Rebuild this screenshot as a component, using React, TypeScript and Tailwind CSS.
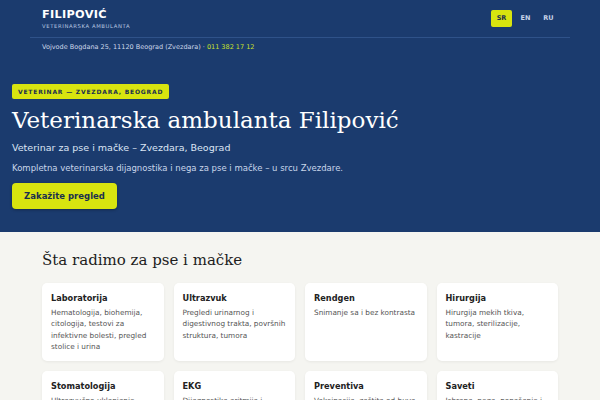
import React from "react";

const sans = { fontFamily: '"DejaVu Sans", sans-serif' };
const serif = { fontFamily: '"DejaVu Serif", serif' };

const services = [
  { t: "Laboratorija", d: "Hematologija, biohemija, citologija, testovi za infektivne bolesti, pregled stolice i urina" },
  { t: "Ultrazvuk", d: "Pregledi urinarnog i digestivnog trakta, površnih struktura, tumora" },
  { t: "Rendgen", d: "Snimanje sa i bez kontrasta" },
  { t: "Hirurgija", d: "Hirurgija mekih tkiva, tumora, sterilizacije, kastracije" },
  { t: "Stomatologija", d: "Ultrazvučno uklanjanje kamenca, vađenje zuba" },
  { t: "EKG", d: "Dijagnostika aritmija i srčanih oboljenja" },
  { t: "Preventiva", d: "Vakcinacija, zaštita od buva i krpelja" },
  { t: "Saveti", d: "Ishrana, nega, ponašanje i dobrobit ljubimaca" },
];

export default function App() {
  return (
    <div className="w-[600px] h-[400px] overflow-hidden bg-[#f5f5f1]" style={sans}>
      <div className="bg-[#1b3b6e]">
        <header className="mx-auto w-[540px]">
          <div className="flex items-start justify-between px-3 pt-[8px] pb-[7px] border-b border-[#2f5289]">
            <div>
              <div className="text-[11.3px] font-bold text-white leading-[14px] tracking-[0.3px]">FILIPOVIĆ</div>
              <div className="text-[5.3px] tracking-[0.6px] text-[#b8c8e0] leading-[7px] mt-[1px]">VETERINARSKA AMBULANTA</div>
            </div>
            <div className="flex items-center gap-[4px] mt-[2px]">
              <span className="bg-[#d8e40f] text-[#1b2f4e] text-[6.5px] font-bold rounded-[2px] w-[21px] h-[17px] flex items-center justify-center">SR</span>
              <span className="text-[#c8d4e8] text-[6.5px] font-bold w-[19px] h-[17px] flex items-center justify-center">EN</span>
              <span className="text-[#c8d4e8] text-[6.5px] font-bold w-[19px] h-[17px] flex items-center justify-center">RU</span>
            </div>
          </div>
          <div className="px-3 pt-[3px] pb-[4px] text-[6.5px] text-[#cdd8ea] leading-[12px]">
            Vojvode Bogdana 25, 11120 Beograd (Zvezdara) · <span className="text-[#c8e02a]">011 382 17 12</span>
          </div>
        </header>
        <section className="px-3 pt-[20px] pb-[23px]">
          <div className="inline-block bg-[#d8e40f] text-[#1b2f4e] text-[6px] font-bold tracking-[0.8px] rounded-[2px] px-[6px] leading-[15px]">
            VETERINAR — ZVEZDARA, BEOGRAD
          </div>
          <h1 className="text-white text-[23px] leading-[28px] mt-[5px]" style={serif}>Veterinarska ambulanta Filipović</h1>
          <p className="text-[#dbe5f4] text-[9.5px] leading-[13px] mt-[7px]">Veterinar za pse i mačke – Zvezdara, Beograd</p>
          <p className="text-[#c9d6ea] text-[8.5px] leading-[12px] mt-[8px]">Kompletna veterinarska dijagnostika i nega za pse i mačke – u srcu Zvezdare.</p>
          <button className="mt-[9px] bg-[#d8e40f] text-[#1b2f4e] text-[8.5px] font-bold rounded-[4px] w-[105px] h-[26px] shadow-[0_1px_3px_rgba(0,0,0,0.3)]">Zakažite pregled</button>
        </section>
      </div>
      <section className="mx-auto w-[540px] px-3 pt-[18px]">
        <h2 className="text-[#1d1d1d] text-[15px] leading-[20px]" style={serif}>Šta radimo za pse i mačke</h2>
        <div className="grid grid-cols-4 gap-[10px] mt-[13px]">
          {services.map((s) => (
            <div key={s.t} className="bg-white rounded-[5px] shadow-[0_1px_3px_rgba(0,0,0,0.06)] px-[9px] pt-[9px] h-[78px]">
              <div className="text-[8.2px] font-bold text-[#222] leading-[12px]">{s.t}</div>
              <div className="text-[7.3px] text-[#555] leading-[11.3px] mt-[3px]">{s.d}</div>
            </div>
          ))}
        </div>
      </section>
    </div>
  );
}
